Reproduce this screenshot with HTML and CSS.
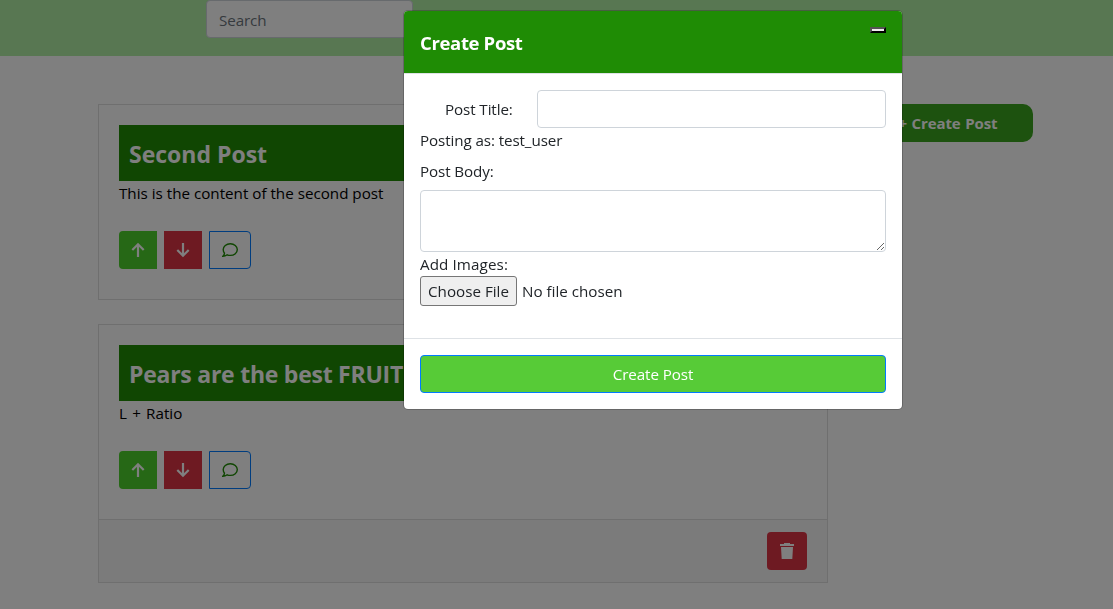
FILE: index.html
```html
<!DOCTYPE html>
<html lang="en">
<head>
<meta charset="utf-8">
<title>Create Post</title>
<link rel="stylesheet" href="styles.css">
</head>
<body>
<nav class="navbar"><input class="control search" type="text" placeholder="Search"></nav>
<main class="page">
  <section class="feed">
    <article class="card">
      <div class="card-body">
        <h2 class="card-title short"><span>Second Post</span></h2>
        <p class="card-text">This is the content of the second post</p>
        <div class="actions">
          <button class="vote up"><svg width="16" height="16" viewBox="0 0 16 16"><path d="M8 15V2.500M2.300 8 8 2.300l5.700 5.700"/></svg></button>
          <button class="vote down"><svg width="16" height="16" viewBox="0 0 16 16"><path d="M8 1v12.500M2.300 8 8 13.700l5.700-5.700"/></svg></button>
          <button class="comment"><svg width="16" height="16" viewBox="0 0 16 16"><path d="M8.3 1.7c4 0 7 2.7 7 5.900s-3 5.800-7 5.800c-1.100 0-2.200-.2-3.100-.6-1.200.9-2.600 1.500-4.400 1.500 1-.9 1.600-2 1.700-3.200C1.600 10.100 1.200 8.900 1.200 7.600c0-3.200 3.100-5.900 7.100-5.900z"/></svg></button>
        </div>
      </div>
    </article>
    <article class="card">
      <div class="card-body">
        <h2 class="card-title"><span>Pears are the best FRUIT</span></h2>
        <p class="card-text wide">L + Ratio</p>
        <div class="actions">
          <button class="vote up"><svg width="16" height="16" viewBox="0 0 16 16"><path d="M8 15V2.500M2.300 8 8 2.300l5.700 5.700"/></svg></button>
          <button class="vote down"><svg width="16" height="16" viewBox="0 0 16 16"><path d="M8 1v12.500M2.300 8 8 13.700l5.700-5.700"/></svg></button>
          <button class="comment"><svg width="16" height="16" viewBox="0 0 16 16"><path d="M8.3 1.7c4 0 7 2.7 7 5.900s-3 5.800-7 5.800c-1.100 0-2.200-.2-3.100-.6-1.200.9-2.600 1.500-4.400 1.500 1-.9 1.600-2 1.700-3.200C1.600 10.100 1.200 8.900 1.200 7.600c0-3.200 3.100-5.900 7.100-5.900z"/></svg></button>
        </div>
      </div>
      <footer class="card-footer">
        <button class="trash"><svg width="14" height="16" viewBox="0 0 14 16"><path d="M0 1h4V0h6v1h4v2H0zM1 4h12l-.7 12H1.700z"/></svg></button>
      </footer>
    </article>
  </section>
  <button class="new-post">+ Create Post</button>
</main>
<div class="backdrop">
  <div class="modal">
    <header class="modal-header"><h5 class="modal-title">Create Post</h5><button class="close" aria-label="Close"></button></header>
    <div class="modal-body">
      <div class="title-row"><label class="title-label" for="title">Post Title:</label><input class="control title-input" id="title" type="text"></div>
      <div class="line author">Posting as: test_user</div>
      <label class="line body-label" for="body">Post Body:</label>
      <textarea class="control body-input" id="body"></textarea>
      <div class="line images">Add Images:</div>
      <div class="file"><button class="choose">Choose File</button><span class="none">No file chosen</span></div>
    </div>
    <footer class="modal-footer"><button class="submit">Create Post</button></footer>
  </div>
</div>
</body>
</html>
```

FILE: styles.css
```css
* { box-sizing: border-box; }
body { margin: 0; height: 609px; overflow: hidden; background: #fff; color: #000; font: 15.2px/24px "Open Sans", "Noto Sans", sans-serif; letter-spacing: -.1px; }
button, input, textarea { font: inherit; letter-spacing: inherit; margin: 0; }
h2, h5, p { margin: 0; }
button { padding: 0; }
svg { display: block; }
.control { border: 1px solid #ced4da; border-radius: 4px; background: #fff; padding: 6px 12px; outline: 0; }
.navbar { height: 56px; padding: 0 0 0 206px; background: #b0eea4; display: flex; align-items: flex-start; }
.search { width: 207px; height: 38px; padding-top: 8px; }
.search::placeholder { color: #6c757d; opacity: 1; }
.page { padding: 48px 80px 0 98px; display: flex; justify-content: space-between; align-items: flex-start; }
.feed { width: 730px; display: flex; flex-direction: column; gap: 24px; }
.card { border: 1px solid #dfdfdf; }
.card-body { padding: 20px 20px 30px; }
.card-title { height: 56px; padding: 12px 10px 0; background: #208c04; color: #fff; font-size: 23px; font-weight: 700; line-height: 34px; letter-spacing: -.25px; white-space: nowrap; }
.short { letter-spacing: 0; }
.card-text { height: 24px; margin-bottom: 26px; letter-spacing: 0; }
.wide { word-spacing: 1.3px; }
.actions { display: flex; gap: 7px; height: 38px; }
.vote, .comment, .trash { display: flex; align-items: center; justify-content: center; border: 0; height: 38px; }
.vote { width: 38px; }
.vote path { fill: none; stroke: #fff; stroke-width: 2.2; }
.up { background: #4cd02c; border-radius: 4px 0 0 4px; }
.down { background: #dc3545; }
.comment { width: 42px; border: 1px solid #007bff; border-radius: 0 4px 4px 0; background: #fff; }
.comment path { fill: none; stroke: #208c04; stroke-width: 1.4; }
.card-footer { height: 63px; padding: 12px 20px; border-top: 1px solid #dfdfdf; background: #f7f7f7; display: flex; justify-content: flex-end; }
.trash { width: 40px; background: #dc3545; border-radius: 4px; }
.trash path { fill: #fff; }
.new-post { width: 170px; height: 38px; border: 0; border-radius: 10px; background: #3aa51e; color: #fff; font-weight: 700; font-size: 15px; letter-spacing: -.1px; word-spacing: .8px; }
.backdrop { position: fixed; inset: 0; background: rgba(0, 0, 0, .5); }
.modal { width: 500px; height: 400px; margin: 10px 0 0 403px; border: 1px solid rgba(0, 0, 0, .2); border-radius: 5px; background: #fff; background-clip: padding-box; overflow: hidden; color: #212529; }
.modal-header { height: 63px; padding: 16px; border-bottom: 1px solid #dee2e6; background: #1f8c05; background-clip: padding-box; display: flex; justify-content: space-between; align-items: flex-start; }
.modal-title { color: #fff; font-size: 18.5px; line-height: 30px; font-weight: 700; letter-spacing: -.35px; padding-top: 1px; }
.close { width: 16px; height: 6px; border: 2px outset #000; background: #efefef; }
.modal-body { height: 264px; padding: 16px; }
.title-row { height: 38px; display: flex; justify-content: space-between; align-items: center; padding-left: 25px; }
.title-input { width: 349px; height: 38px; }
.line { display: block; height: 24px; }
.body-label { margin: 7px 0; }
.body-input { display: block; width: 100%; height: 62px; resize: vertical; }
.images { letter-spacing: .1px; }
.file { display: flex; align-items: center; gap: 5px; height: 30px; letter-spacing: 0; }
.choose { width: 97px; height: 30px; border: 1px solid #767676; border-radius: 3px; background: #efefef; color: #212529; }
.modal-footer { height: 71px; padding: 16px; border-top: 1px solid #dee2e6; }
.submit { width: 100%; height: 38px; border: 1px solid #007bff; border-radius: 4px; background: #57cb37; color: #fff; }
```
